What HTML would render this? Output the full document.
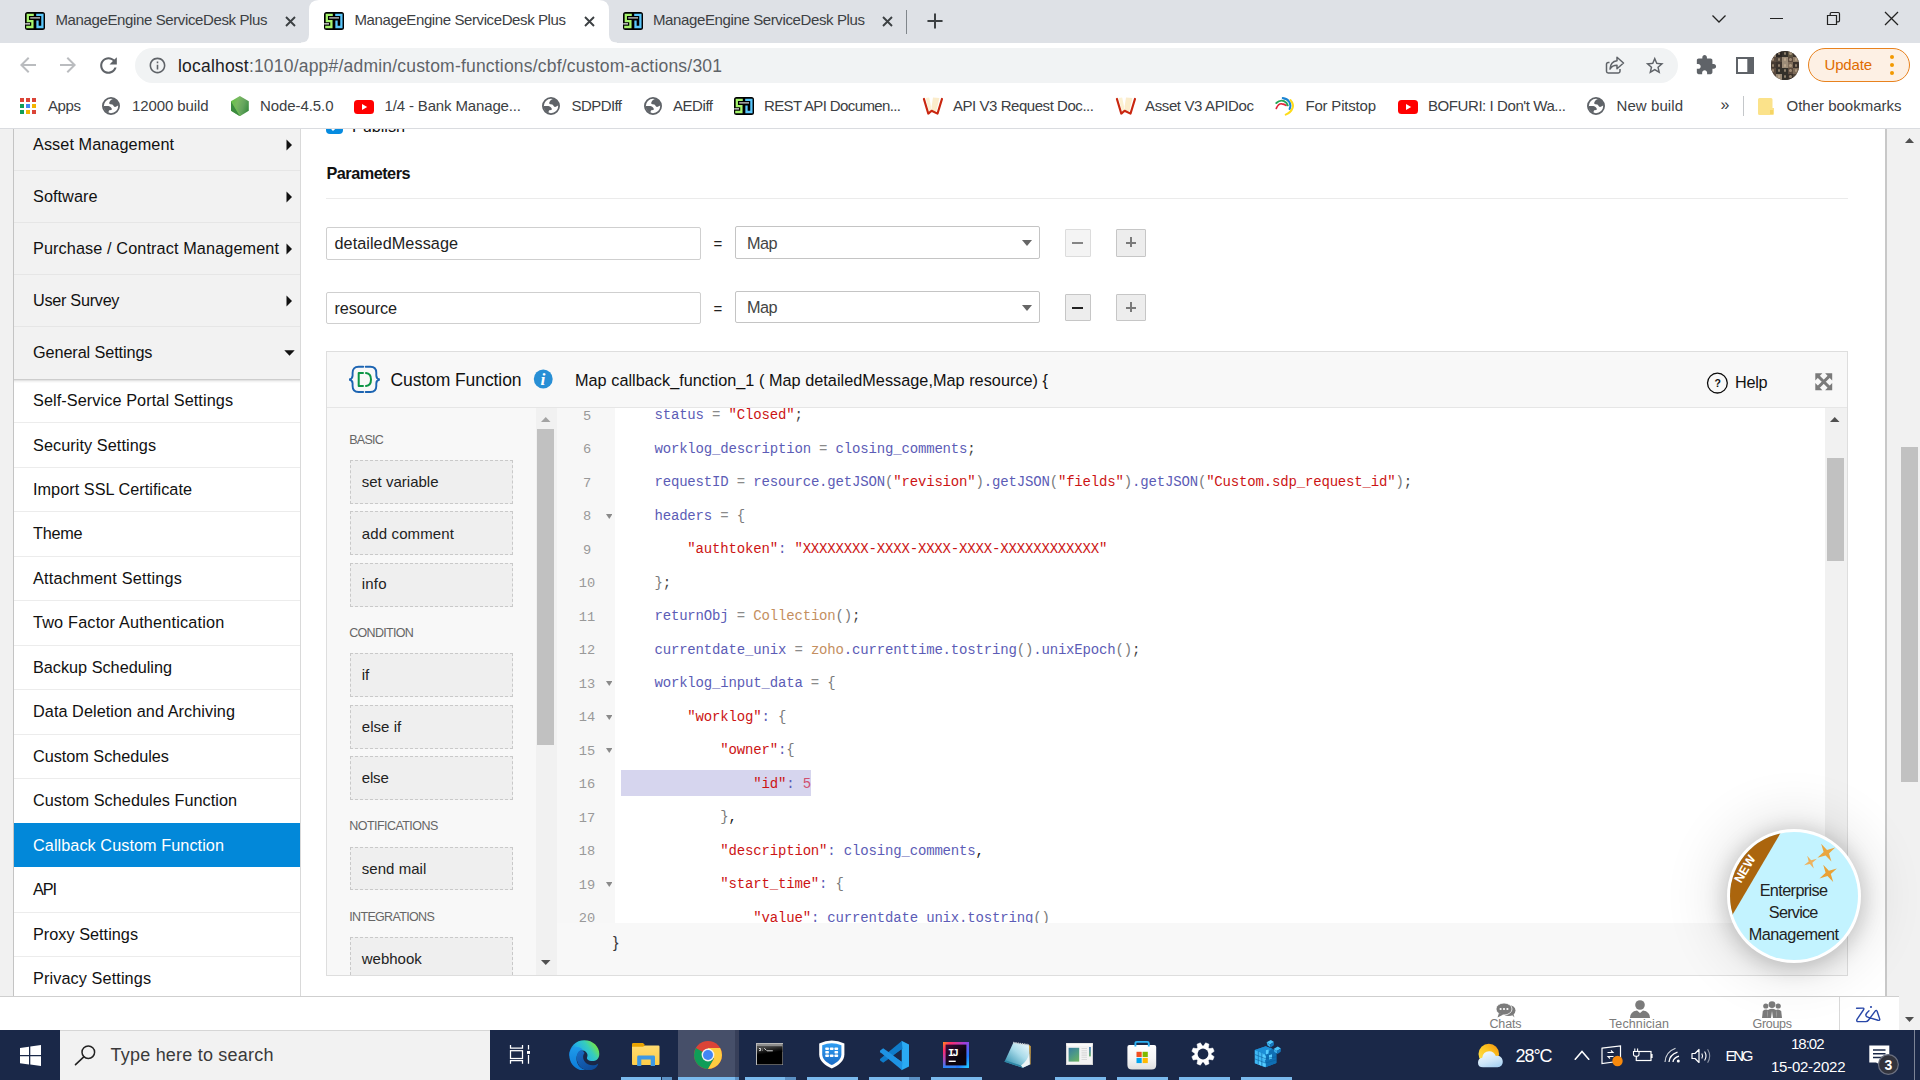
<!DOCTYPE html>
<html lang="en"><head><meta charset="utf-8"><title>ManageEngine ServiceDesk Plus</title>
<style>
html,body{margin:0;padding:0;}
body{width:1920px;height:1080px;overflow:hidden;position:relative;background:#fff;font-family:"Liberation Sans",sans-serif;}
.b{position:absolute;display:block;}
.t{position:absolute;white-space:pre;line-height:20px;font-family:"Liberation Sans",sans-serif;}
.m{position:absolute;white-space:pre;line-height:20px;font-family:"Liberation Mono",monospace;}
</style></head>
<body>
<!-- chrome -->
<div class="b" style="left:0px;top:0px;width:1920px;height:42.6px;background:#dee1e6;"></div>
<svg class="b" style="left:301px;top:0px;" width="316" height="43" viewBox="0 0 316 43"><path d="M0 42.6 Q8 42.6 8 34.6 V10 Q8 0 18 0 H298 Q308 0 308 10 V34.6 Q308 42.6 316 42.6 V43 H0 Z" fill="#fff"/></svg>
<svg class="b" style="left:25px;top:12px;" width="20" height="18" viewBox="0 0 20 18"><rect x="0" y="0" width="20" height="18" rx="2.5" fill="#000"/><path d="M8.8 2.8H2.8V9.2H7.4V15H1.2" fill="none" stroke="#a6f46c" stroke-width="2.3"/><path d="M11.2 2.9H17.4V15H12.5V8.4" fill="none" stroke="#5ac6fb" stroke-width="2.3"/><rect x="5.2" y="5.3" width="9.8" height="1.2" fill="#dcdcdc"/><rect x="0.2" y="11.2" width="4.8" height="1.3" fill="#e4e4e4"/></svg>
<div class="t" style="left:55.50px;top:9.80px;font-size:15px;color:#3c4043;letter-spacing:-0.380px;">ManageEngine ServiceDesk Plus</div>
<svg class="b" style="left:284.5px;top:15.5px;" width="11" height="11" viewBox="0 0 11 11"><path d="M1 1L10 10M10 1L1 10" stroke="#3c4043" stroke-width="1.9" fill="none"/></svg>
<svg class="b" style="left:324px;top:12px;" width="20" height="18" viewBox="0 0 20 18"><rect x="0" y="0" width="20" height="18" rx="2.5" fill="#000"/><path d="M8.8 2.8H2.8V9.2H7.4V15H1.2" fill="none" stroke="#a6f46c" stroke-width="2.3"/><path d="M11.2 2.9H17.4V15H12.5V8.4" fill="none" stroke="#5ac6fb" stroke-width="2.3"/><rect x="5.2" y="5.3" width="9.8" height="1.2" fill="#dcdcdc"/><rect x="0.2" y="11.2" width="4.8" height="1.3" fill="#e4e4e4"/></svg>
<div class="t" style="left:354.50px;top:9.80px;font-size:15px;color:#3c4043;letter-spacing:-0.397px;">ManageEngine ServiceDesk Plus</div>
<svg class="b" style="left:583.5px;top:15.5px;" width="11" height="11" viewBox="0 0 11 11"><path d="M1 1L10 10M10 1L1 10" stroke="#3c4043" stroke-width="1.9" fill="none"/></svg>
<svg class="b" style="left:623px;top:12px;" width="20" height="18" viewBox="0 0 20 18"><rect x="0" y="0" width="20" height="18" rx="2.5" fill="#000"/><path d="M8.8 2.8H2.8V9.2H7.4V15H1.2" fill="none" stroke="#a6f46c" stroke-width="2.3"/><path d="M11.2 2.9H17.4V15H12.5V8.4" fill="none" stroke="#5ac6fb" stroke-width="2.3"/><rect x="5.2" y="5.3" width="9.8" height="1.2" fill="#dcdcdc"/><rect x="0.2" y="11.2" width="4.8" height="1.3" fill="#e4e4e4"/></svg>
<div class="t" style="left:653.00px;top:9.80px;font-size:15px;color:#3c4043;letter-spacing:-0.380px;">ManageEngine ServiceDesk Plus</div>
<svg class="b" style="left:882px;top:15.5px;" width="11" height="11" viewBox="0 0 11 11"><path d="M1 1L10 10M10 1L1 10" stroke="#3c4043" stroke-width="1.9" fill="none"/></svg>
<div class="b" style="left:906px;top:10px;width:1.3px;height:23.5px;background:#80868b;"></div>
<svg class="b" style="left:927.2px;top:12.9px;" width="16" height="16" viewBox="0 0 16 16"><path d="M8 1.2V14.8M1.2 8H14.8" stroke="#3c4043" stroke-width="2" fill="none" stroke-linecap="round"/></svg>
<svg class="b" style="left:1711px;top:14px;" width="16" height="10" viewBox="0 0 16 10"><path d="M1.5 1.5L8 8L14.5 1.5" stroke="#222" stroke-width="1.3" fill="none"/></svg>
<div class="b" style="left:1770px;top:18px;width:13px;height:1.3px;background:#222;"></div>
<svg class="b" style="left:1826px;top:11px;" width="15" height="15" viewBox="0 0 15 15"><path d="M1.5 4.5H10.5V13.5H1.5Z" stroke="#222" stroke-width="1.2" fill="none"/><path d="M4.2 4.3V2.8Q4.2 1.5 5.5 1.5H12.2Q13.5 1.5 13.5 2.8V9.5Q13.5 10.8 12.2 10.8H10.8" stroke="#222" stroke-width="1.2" fill="none"/></svg>
<svg class="b" style="left:1884px;top:11px;" width="15" height="15" viewBox="0 0 15 15"><path d="M1 1L14 14M14 1L1 14" stroke="#222" stroke-width="1.3" fill="none"/></svg>
<div class="b" style="left:0px;top:43px;width:1920px;height:45px;background:#fff;"></div>
<svg class="b" style="left:15.5px;top:52.6px;" width="24" height="24" viewBox="0 0 24 24"><path fill="#babcbf" d="M20 11H7.83l5.59-5.59L12 4l-8 8 8 8 1.41-1.41L7.83 13H20v-2z"/></svg>
<svg class="b" style="left:55.5px;top:52.6px;" width="24" height="24" viewBox="0 0 24 24"><path fill="#babcbf" d="M12 4l-1.41 1.41L16.17 11H4v2h12.17l-5.58 5.59L12 20l8-8z"/></svg>
<svg class="b" style="left:95.5px;top:52.5px;" width="25" height="25" viewBox="0 0 24 24"><path fill="#5f6368" d="M17.65 6.35C16.2 4.9 14.21 4 12 4c-4.42 0-7.99 3.58-7.99 8s3.57 8 7.99 8c3.73 0 6.84-2.55 7.73-6h-2.08c-.82 2.33-3.04 4-5.65 4-3.31 0-6-2.69-6-6s2.69-6 6-6c1.66 0 3.14.69 4.22 1.78L13 11h7V4l-2.35 2.35z"/></svg>
<div class="b" style="left:135px;top:48px;width:1543px;height:34.5px;background:#f1f3f4;border-radius:17.5px;"></div>
<svg class="b" style="left:148px;top:56px;" width="19" height="19" viewBox="0 0 24 24"><path fill="#5f6368" d="M11 7h2v2h-2zm0 4h2v6h-2zm1-9C6.48 2 2 6.48 2 12s4.48 10 10 10 10-4.48 10-10S17.52 2 12 2zm0 18c-4.41 0-8-3.59-8-8s3.59-8 8-8 8 3.59 8 8-3.59 8-8 8z"/></svg>
<div class="t" style="left:178.00px;top:55.94px;font-size:17.5px;color:#202124;letter-spacing:0.201px;">localhost</div>
<div class="t" style="left:248.88px;top:55.94px;font-size:17.5px;color:#5f6368;letter-spacing:0.201px;">:1010/app#/admin/custom-functions/cbf/custom-actions/301</div>
<svg class="b" style="left:1605px;top:55px;" width="20" height="20" viewBox="0 0 20 20"><path d="M4.5 7.5H3.2Q1.5 7.5 1.5 9.2V16.3Q1.5 18 3.2 18H13.3Q15 18 15 16.3V14" stroke="#5f6368" stroke-width="1.5" fill="none"/><path d="M12 2.2L18.5 8L12 13.8V10.3C8.5 10.3 6.5 11.5 5 14C5.3 9.5 7.8 6.3 12 5.8Z" stroke="#5f6368" stroke-width="1.5" fill="none" stroke-linejoin="round"/></svg>
<svg class="b" style="left:1644px;top:54.5px;" width="21.5" height="21.5" viewBox="0 0 24 24"><path fill="#5f6368" d="M22 9.24l-7.19-.62L12 2 9.19 8.63 2 9.24l5.46 4.73L5.82 21 12 17.27 18.18 21l-1.63-7.03L22 9.24zM12 15.4l-3.76 2.27 1-4.28-3.32-2.88 4.38-.38L12 6.1l1.71 4.04 4.38.38-3.32 2.88 1 4.28L12 15.4z"/></svg>
<svg class="b" style="left:1695px;top:54px;" width="22" height="22" viewBox="0 0 24 24"><path fill="#5f6368" d="M20.5 11H19V7c0-1.1-.9-2-2-2h-4V3.5C13 2.12 11.88 1 10.5 1S8 2.12 8 3.5V5H4c-1.1 0-1.99.9-1.99 2v3.8H3.5c1.49 0 2.7 1.21 2.7 2.7s-1.21 2.7-2.7 2.7H2V20c0 1.1.9 2 2 2h3.8v-1.5c0-1.49 1.21-2.7 2.7-2.7 1.49 0 2.7 1.21 2.7 2.7V22H17c1.1 0 2-.9 2-2v-4h1.5c1.38 0 2.5-1.12 2.5-2.5S21.88 11 20.5 11z"/></svg>
<svg class="b" style="left:1736px;top:57px;" width="18" height="17" viewBox="0 0 18 17"><rect x="1" y="1" width="16" height="15" fill="none" stroke="#5f6368" stroke-width="2"/><rect x="11.3" y="1" width="5.7" height="15" fill="#5f6368"/></svg>
<div class="b" style="left:1770.5px;top:51px;width:28.5px;height:28.5px;border-radius:50%;overflow:hidden;background:#453b33;"><div class="b" style="left:0px;top:0px;width:5.8px;height:5.8px;background:#8f7d68;"></div><div class="b" style="left:1.6px;top:1.2px;width:2.4px;height:3px;background:rgba(214,190,160,0.55);border-radius:50%;"></div><div class="b" style="left:5.7px;top:0px;width:5.8px;height:5.8px;background:#2b2623;"></div><div class="b" style="left:7.3px;top:1.2px;width:2.4px;height:3px;background:rgba(214,190,160,0.55);border-radius:50%;"></div><div class="b" style="left:11.4px;top:0px;width:5.8px;height:5.8px;background:#33302a;"></div><div class="b" style="left:13px;top:1.2px;width:2.4px;height:3px;background:rgba(214,190,160,0.55);border-radius:50%;"></div><div class="b" style="left:17.1px;top:0px;width:5.8px;height:5.8px;background:#5d5340;"></div><div class="b" style="left:18.7px;top:1.2px;width:2.4px;height:3px;background:rgba(214,190,160,0.55);border-radius:50%;"></div><div class="b" style="left:22.8px;top:0px;width:5.8px;height:5.8px;background:#3b322c;"></div><div class="b" style="left:24.4px;top:1.2px;width:2.4px;height:3px;background:rgba(214,190,160,0.55);border-radius:50%;"></div><div class="b" style="left:0px;top:5.7px;width:5.8px;height:5.8px;background:#5a4a3e;"></div><div class="b" style="left:1.6px;top:6.9px;width:2.4px;height:3px;background:rgba(214,190,160,0.55);border-radius:50%;"></div><div class="b" style="left:5.7px;top:5.7px;width:5.8px;height:5.8px;background:#50453a;"></div><div class="b" style="left:7.3px;top:6.9px;width:2.4px;height:3px;background:rgba(214,190,160,0.55);border-radius:50%;"></div><div class="b" style="left:11.4px;top:5.7px;width:5.8px;height:5.8px;background:#9c8c78;"></div><div class="b" style="left:13px;top:6.9px;width:2.4px;height:3px;background:rgba(214,190,160,0.55);border-radius:50%;"></div><div class="b" style="left:17.1px;top:5.7px;width:5.8px;height:5.8px;background:#5a4a3e;"></div><div class="b" style="left:18.7px;top:6.9px;width:2.4px;height:3px;background:rgba(214,190,160,0.55);border-radius:50%;"></div><div class="b" style="left:22.8px;top:5.7px;width:5.8px;height:5.8px;background:#8f7d68;"></div><div class="b" style="left:24.4px;top:6.9px;width:2.4px;height:3px;background:rgba(214,190,160,0.55);border-radius:50%;"></div><div class="b" style="left:0px;top:11.4px;width:5.8px;height:5.8px;background:#453a31;"></div><div class="b" style="left:1.6px;top:12.6px;width:2.4px;height:3px;background:rgba(214,190,160,0.55);border-radius:50%;"></div><div class="b" style="left:5.7px;top:11.4px;width:5.8px;height:5.8px;background:#3b322c;"></div><div class="b" style="left:7.3px;top:12.6px;width:2.4px;height:3px;background:rgba(214,190,160,0.55);border-radius:50%;"></div><div class="b" style="left:11.4px;top:11.4px;width:5.8px;height:5.8px;background:#9c8c78;"></div><div class="b" style="left:13px;top:12.6px;width:2.4px;height:3px;background:rgba(214,190,160,0.55);border-radius:50%;"></div><div class="b" style="left:17.1px;top:11.4px;width:5.8px;height:5.8px;background:#7c6a58;"></div><div class="b" style="left:18.7px;top:12.6px;width:2.4px;height:3px;background:rgba(214,190,160,0.55);border-radius:50%;"></div><div class="b" style="left:22.8px;top:11.4px;width:5.8px;height:5.8px;background:#3b322c;"></div><div class="b" style="left:24.4px;top:12.6px;width:2.4px;height:3px;background:rgba(214,190,160,0.55);border-radius:50%;"></div><div class="b" style="left:0px;top:17.1px;width:5.8px;height:5.8px;background:#5a4a3e;"></div><div class="b" style="left:1.6px;top:18.3px;width:2.4px;height:3px;background:rgba(214,190,160,0.55);border-radius:50%;"></div><div class="b" style="left:5.7px;top:17.1px;width:5.8px;height:5.8px;background:#33302a;"></div><div class="b" style="left:7.3px;top:18.3px;width:2.4px;height:3px;background:rgba(214,190,160,0.55);border-radius:50%;"></div><div class="b" style="left:11.4px;top:17.1px;width:5.8px;height:5.8px;background:#33302a;"></div><div class="b" style="left:13px;top:18.3px;width:2.4px;height:3px;background:rgba(214,190,160,0.55);border-radius:50%;"></div><div class="b" style="left:17.1px;top:17.1px;width:5.8px;height:5.8px;background:#5a4a3e;"></div><div class="b" style="left:18.7px;top:18.3px;width:2.4px;height:3px;background:rgba(214,190,160,0.55);border-radius:50%;"></div><div class="b" style="left:22.8px;top:17.1px;width:5.8px;height:5.8px;background:#7c6a58;"></div><div class="b" style="left:24.4px;top:18.3px;width:2.4px;height:3px;background:rgba(214,190,160,0.55);border-radius:50%;"></div><div class="b" style="left:0px;top:22.8px;width:5.8px;height:5.8px;background:#5a4a3e;"></div><div class="b" style="left:1.6px;top:24px;width:2.4px;height:3px;background:rgba(214,190,160,0.55);border-radius:50%;"></div><div class="b" style="left:5.7px;top:22.8px;width:5.8px;height:5.8px;background:#9c8c78;"></div><div class="b" style="left:7.3px;top:24px;width:2.4px;height:3px;background:rgba(214,190,160,0.55);border-radius:50%;"></div><div class="b" style="left:11.4px;top:22.8px;width:5.8px;height:5.8px;background:#33302a;"></div><div class="b" style="left:13px;top:24px;width:2.4px;height:3px;background:rgba(214,190,160,0.55);border-radius:50%;"></div><div class="b" style="left:17.1px;top:22.8px;width:5.8px;height:5.8px;background:#3b322c;"></div><div class="b" style="left:18.7px;top:24px;width:2.4px;height:3px;background:rgba(214,190,160,0.55);border-radius:50%;"></div><div class="b" style="left:22.8px;top:22.8px;width:5.8px;height:5.8px;background:#50453a;"></div><div class="b" style="left:24.4px;top:24px;width:2.4px;height:3px;background:rgba(214,190,160,0.55);border-radius:50%;"></div></div>
<div class="b" style="left:1808px;top:48px;width:102px;height:34px;background:#fdf0e4;border:1.5px solid #e8821e;border-radius:17px;box-sizing:border-box;"></div>
<div class="t" style="left:1824.50px;top:54.80px;font-size:15px;color:#e06c00;letter-spacing:-0.174px;">Update</div>
<div class="b" style="left:1890px;top:55px;width:4px;height:4px;background:#f29900;border-radius:50%;"></div>
<div class="b" style="left:1890px;top:63px;width:4px;height:4px;background:#f29900;border-radius:50%;"></div>
<div class="b" style="left:1890px;top:71px;width:4px;height:4px;background:#f29900;border-radius:50%;"></div>
<div class="b" style="left:0px;top:88px;width:1920px;height:40px;background:#fff;"></div>
<div class="b" style="left:0px;top:128px;width:1920px;height:1px;background:#dadce0;"></div>
<div class="b" style="left:20px;top:97.5px;width:4.2px;height:4.2px;background:#db4437;"></div>
<div class="b" style="left:26px;top:97.5px;width:4.2px;height:4.2px;background:#db4437;"></div>
<div class="b" style="left:32px;top:97.5px;width:4.2px;height:4.2px;background:#db4437;"></div>
<div class="b" style="left:20px;top:103.5px;width:4.2px;height:4.2px;background:#0f9d58;"></div>
<div class="b" style="left:26px;top:103.5px;width:4.2px;height:4.2px;background:#4285f4;"></div>
<div class="b" style="left:32px;top:103.5px;width:4.2px;height:4.2px;background:#f4b400;"></div>
<div class="b" style="left:20px;top:109.5px;width:4.2px;height:4.2px;background:#0f9d58;"></div>
<div class="b" style="left:26px;top:109.5px;width:4.2px;height:4.2px;background:#f4b400;"></div>
<div class="b" style="left:32px;top:109.5px;width:4.2px;height:4.2px;background:#db4437;"></div>
<div class="t" style="left:48.00px;top:95.80px;font-size:15px;color:#3c4043;letter-spacing:-0.397px;">Apps</div>
<svg class="b" style="left:102px;top:97px;" width="18" height="18" viewBox="0 0 18 18"><circle cx="9" cy="9" r="8.1" fill="#fff" stroke="#5f6368" stroke-width="1.8"/><path d="M10.1 2.2Q8.3 3.3 7.9 4.2Q7 5.5 7.2 6.4Q7.6 7.2 8.5 7.2L10.4 7.4Q11.2 7.8 11.8 9.3Q12.6 10.2 13.7 9.8L15.9 8.7Q16.6 5.5 14.4 3Q12.5 1.3 10.1 2.2Z" fill="#5f6368"/><path d="M1.7 9H6.4Q8 9.3 8.8 10.3Q9.9 11.5 9.8 12.2Q9.7 12.9 9.2 13L7.3 13.2Q6.5 13.8 6.6 14.7Q6.8 15.4 7.5 15.8Q4.5 15.8 2.8 13.3Q1.6 11.4 1.7 9Z" fill="#5f6368"/></svg>
<div class="t" style="left:132.00px;top:95.80px;font-size:15px;color:#3c4043;letter-spacing:-0.107px;">12000 build</div>
<svg class="b" style="left:231px;top:95.9px;" width="17.8" height="20.2" viewBox="0 0 17.8 20.2"><defs><linearGradient id="nd" x1="0" y1="0.2" x2="1" y2="0.6"><stop offset="0" stop-color="#62c341"/><stop offset="0.35" stop-color="#79b862"/><stop offset="0.7" stop-color="#63a35d"/><stop offset="1" stop-color="#3b8d40"/></linearGradient></defs><path d="M8.9 0L17.8 5.2V14.8L8.9 20.2L0 14.8V5.2Z" fill="url(#nd)"/><path d="M0 5.2L8.9 20.2L0 14.8Z" fill="#3c8b3f"/><path d="M0 5.2L1.2 4.5L10.2 19.4L8.9 20.2Z" fill="#6fc24f" opacity="0.55"/></svg>
<div class="t" style="left:260.00px;top:95.80px;font-size:15px;color:#3c4043;letter-spacing:-0.080px;">Node-4.5.0</div>
<svg class="b" style="left:354px;top:99.5px;" width="20" height="14" viewBox="0 0 20 14"><rect width="20" height="14" rx="3.5" fill="#f00"/><path d="M8 4l5.2 3L8 10z" fill="#fff"/></svg>
<div class="t" style="left:384.50px;top:95.80px;font-size:15px;color:#3c4043;letter-spacing:-0.145px;">1/4 - Bank Manage...</div>
<svg class="b" style="left:542px;top:97px;" width="18" height="18" viewBox="0 0 18 18"><circle cx="9" cy="9" r="8.1" fill="#fff" stroke="#5f6368" stroke-width="1.8"/><path d="M10.1 2.2Q8.3 3.3 7.9 4.2Q7 5.5 7.2 6.4Q7.6 7.2 8.5 7.2L10.4 7.4Q11.2 7.8 11.8 9.3Q12.6 10.2 13.7 9.8L15.9 8.7Q16.6 5.5 14.4 3Q12.5 1.3 10.1 2.2Z" fill="#5f6368"/><path d="M1.7 9H6.4Q8 9.3 8.8 10.3Q9.9 11.5 9.8 12.2Q9.7 12.9 9.2 13L7.3 13.2Q6.5 13.8 6.6 14.7Q6.8 15.4 7.5 15.8Q4.5 15.8 2.8 13.3Q1.6 11.4 1.7 9Z" fill="#5f6368"/></svg>
<div class="t" style="left:571.50px;top:95.80px;font-size:15px;color:#3c4043;letter-spacing:-0.568px;">SDPDIff</div>
<svg class="b" style="left:644px;top:97px;" width="18" height="18" viewBox="0 0 18 18"><circle cx="9" cy="9" r="8.1" fill="#fff" stroke="#5f6368" stroke-width="1.8"/><path d="M10.1 2.2Q8.3 3.3 7.9 4.2Q7 5.5 7.2 6.4Q7.6 7.2 8.5 7.2L10.4 7.4Q11.2 7.8 11.8 9.3Q12.6 10.2 13.7 9.8L15.9 8.7Q16.6 5.5 14.4 3Q12.5 1.3 10.1 2.2Z" fill="#5f6368"/><path d="M1.7 9H6.4Q8 9.3 8.8 10.3Q9.9 11.5 9.8 12.2Q9.7 12.9 9.2 13L7.3 13.2Q6.5 13.8 6.6 14.7Q6.8 15.4 7.5 15.8Q4.5 15.8 2.8 13.3Q1.6 11.4 1.7 9Z" fill="#5f6368"/></svg>
<div class="t" style="left:673.00px;top:95.80px;font-size:15px;color:#3c4043;letter-spacing:-0.448px;">AEDiff</div>
<svg class="b" style="left:734px;top:97px;" width="20" height="18" viewBox="0 0 20 18"><rect x="0" y="0" width="20" height="18" rx="2.5" fill="#000"/><path d="M8.8 2.8H2.8V9.2H7.4V15H1.2" fill="none" stroke="#a6f46c" stroke-width="2.3"/><path d="M11.2 2.9H17.4V15H12.5V8.4" fill="none" stroke="#5ac6fb" stroke-width="2.3"/><rect x="5.2" y="5.3" width="9.8" height="1.2" fill="#dcdcdc"/><rect x="0.2" y="11.2" width="4.8" height="1.3" fill="#e4e4e4"/></svg>
<div class="t" style="left:764.00px;top:95.80px;font-size:15px;color:#3c4043;letter-spacing:-0.618px;">REST API Documen...</div>
<svg class="b" style="left:922px;top:97px;" width="22" height="19" viewBox="0 0 22 19"><path d="M3.7 0.9L7.2 0.5L9 9.6L9.6 13.1L6.9 14.5Z" fill="#fcf1d2"/><path d="M11 0.5L17.4 1L14.3 14.8L9.9 13.1L9.6 9.6Z" fill="#fbeccb"/><path d="M1.9 1.9L6.3 16.6L9.6 13.7L15.5 16.6L20 1.9" fill="none" stroke="#c9260f" stroke-width="2.1" stroke-linejoin="round" stroke-linecap="round"/></svg>
<div class="t" style="left:953.00px;top:95.80px;font-size:15px;color:#3c4043;letter-spacing:-0.454px;">API V3 Request Doc...</div>
<svg class="b" style="left:1114.5px;top:97px;" width="22" height="19" viewBox="0 0 22 19"><path d="M3.7 0.9L7.2 0.5L9 9.6L9.6 13.1L6.9 14.5Z" fill="#fcf1d2"/><path d="M11 0.5L17.4 1L14.3 14.8L9.9 13.1L9.6 9.6Z" fill="#fbeccb"/><path d="M1.9 1.9L6.3 16.6L9.6 13.7L15.5 16.6L20 1.9" fill="none" stroke="#c9260f" stroke-width="2.1" stroke-linejoin="round" stroke-linecap="round"/></svg>
<div class="t" style="left:1145.00px;top:95.80px;font-size:15px;color:#3c4043;letter-spacing:-0.373px;">Asset V3 APIDoc</div>
<svg class="b" style="left:1274px;top:96px;" width="21" height="20" viewBox="0 0 21 20"><path d="M2.3 12.4Q4.5 7.3 7.8 7.8Q10.2 8 12 9.4" stroke="#e0243a" stroke-width="1.7" fill="none" stroke-linecap="round"/><path d="M2.3 7Q6 3.6 10 5.1Q13 6.4 13.8 9.4" stroke="#23a455" stroke-width="1.9" fill="none" stroke-linecap="round"/><path d="M8.8 2.1Q13 2.4 15.4 6Q17.3 9.5 15.6 13" stroke="#1b84d2" stroke-width="2.1" fill="none" stroke-linecap="round"/><path d="M16.5 4.1Q19.8 8 18.7 11.6Q17 16.6 11.7 18.6" stroke="#fddc1a" stroke-width="2" fill="none" stroke-linecap="round"/></svg>
<div class="t" style="left:1305.50px;top:95.80px;font-size:15px;color:#3c4043;letter-spacing:-0.203px;">For Pitstop</div>
<svg class="b" style="left:1398px;top:99.5px;" width="20" height="14" viewBox="0 0 20 14"><rect width="20" height="14" rx="3.5" fill="#f00"/><path d="M8 4l5.2 3L8 10z" fill="#fff"/></svg>
<div class="t" style="left:1428.00px;top:95.80px;font-size:15px;color:#3c4043;letter-spacing:-0.425px;">BOFURI: I Don't Wa...</div>
<svg class="b" style="left:1587px;top:97px;" width="18" height="18" viewBox="0 0 18 18"><circle cx="9" cy="9" r="8.1" fill="#fff" stroke="#5f6368" stroke-width="1.8"/><path d="M10.1 2.2Q8.3 3.3 7.9 4.2Q7 5.5 7.2 6.4Q7.6 7.2 8.5 7.2L10.4 7.4Q11.2 7.8 11.8 9.3Q12.6 10.2 13.7 9.8L15.9 8.7Q16.6 5.5 14.4 3Q12.5 1.3 10.1 2.2Z" fill="#5f6368"/><path d="M1.7 9H6.4Q8 9.3 8.8 10.3Q9.9 11.5 9.8 12.2Q9.7 12.9 9.2 13L7.3 13.2Q6.5 13.8 6.6 14.7Q6.8 15.4 7.5 15.8Q4.5 15.8 2.8 13.3Q1.6 11.4 1.7 9Z" fill="#5f6368"/></svg>
<div class="t" style="left:1616.50px;top:95.80px;font-size:15px;color:#3c4043;letter-spacing:0.079px;">New build</div>
<div class="t" style="left:1720.50px;top:94.96px;font-size:16px;color:#3c4043;">»</div>
<div class="b" style="left:1743px;top:96px;width:1px;height:19.5px;background:#c4c7ca;"></div>
<svg class="b" style="left:1758px;top:97px;" width="17" height="18" viewBox="0 0 17 18"><path d="M0 2.5Q0 1 1.5 1H13Q14.5 1 14.5 2.5V11H16V16.5Q16 18 14.5 18H1.5Q0 18 0 16.5Z" fill="#fbe28a"/><rect x="12" y="13" width="3" height="4" fill="#f5d565"/></svg>
<div class="t" style="left:1786.50px;top:95.80px;font-size:15px;color:#3c4043;letter-spacing:-0.003px;">Other bookmarks</div>
<!-- sidebar -->
<div class="b" style="left:0px;top:129px;width:1920px;height:901px;background:#fff;"></div>
<div class="b" style="left:0px;top:129px;width:13px;height:868px;background:#f1f1f1;"></div>
<div class="b" style="left:13px;top:129px;width:1px;height:868px;background:#c4c4c4;"></div>
<div class="b" style="left:14px;top:129px;width:286px;height:250px;background:#f2f2f2;"></div>
<div class="b" style="left:14px;top:170px;width:286px;height:1px;background:#e6e6e6;"></div>
<div class="b" style="left:14px;top:222px;width:286px;height:1px;background:#e6e6e6;"></div>
<div class="b" style="left:14px;top:274px;width:286px;height:1px;background:#e6e6e6;"></div>
<div class="b" style="left:14px;top:326px;width:286px;height:1px;background:#e6e6e6;"></div>
<div class="b" style="left:14px;top:379px;width:286px;height:1px;background:#cdcdcd;"></div>
<div class="b" style="left:14px;top:380px;width:286px;height:1px;background:#e4e4e4;"></div>
<div class="b" style="left:14px;top:381px;width:286px;height:1px;background:#f3f3f3;"></div>
<div class="b" style="left:14px;top:382px;width:286px;height:1px;background:#fafafa;"></div>
<div class="b" style="left:300px;top:129px;width:1px;height:868px;background:#d9d9d9;"></div>
<div class="t" style="left:33.00px;top:134.37px;font-size:16.25px;color:#111;letter-spacing:0.066px;">Asset Management</div>
<div class="t" style="left:33.00px;top:186.37px;font-size:16.25px;color:#111;letter-spacing:0.053px;">Software</div>
<div class="t" style="left:33.00px;top:238.37px;font-size:16.25px;color:#111;letter-spacing:0.104px;">Purchase / Contract Management</div>
<div class="t" style="left:33.00px;top:290.37px;font-size:16.25px;color:#111;letter-spacing:-0.290px;">User Survey</div>
<div class="t" style="left:33.00px;top:342.37px;font-size:16.25px;color:#111;letter-spacing:-0.103px;">General Settings</div>
<svg class="b" style="left:286px;top:138.5px;" width="7" height="12" viewBox="0 0 7 12"><path d="M0.5 0.5L6 6L0.5 11.5Z" fill="#111"/></svg>
<svg class="b" style="left:286px;top:190.5px;" width="7" height="12" viewBox="0 0 7 12"><path d="M0.5 0.5L6 6L0.5 11.5Z" fill="#111"/></svg>
<svg class="b" style="left:286px;top:242.5px;" width="7" height="12" viewBox="0 0 7 12"><path d="M0.5 0.5L6 6L0.5 11.5Z" fill="#111"/></svg>
<svg class="b" style="left:286px;top:294.5px;" width="7" height="12" viewBox="0 0 7 12"><path d="M0.5 0.5L6 6L0.5 11.5Z" fill="#111"/></svg>
<svg class="b" style="left:283.5px;top:349.5px;" width="11" height="6" viewBox="0 0 11 6"><path d="M0.3 0.3H10.7L5.5 5.7Z" fill="#111"/></svg>
<div class="t" style="left:33.00px;top:390.12px;font-size:16.25px;color:#111;letter-spacing:0.082px;">Self-Service Portal Settings</div>
<div class="b" style="left:14px;top:422px;width:286px;height:1px;background:#ececec;"></div>
<div class="t" style="left:33.00px;top:434.57px;font-size:16.25px;color:#111;letter-spacing:0.067px;">Security Settings</div>
<div class="b" style="left:14px;top:467px;width:286px;height:1px;background:#ececec;"></div>
<div class="t" style="left:33.00px;top:479.02px;font-size:16.25px;color:#111;letter-spacing:0.031px;">Import SSL Certificate</div>
<div class="b" style="left:14px;top:511px;width:286px;height:1px;background:#ececec;"></div>
<div class="t" style="left:33.00px;top:523.47px;font-size:16.25px;color:#111;letter-spacing:-0.269px;">Theme</div>
<div class="b" style="left:14px;top:556px;width:286px;height:1px;background:#ececec;"></div>
<div class="t" style="left:33.00px;top:567.92px;font-size:16.25px;color:#111;letter-spacing:0.185px;">Attachment Settings</div>
<div class="b" style="left:14px;top:600px;width:286px;height:1px;background:#ececec;"></div>
<div class="t" style="left:33.00px;top:612.37px;font-size:16.25px;color:#111;letter-spacing:0.178px;">Two Factor Authentication</div>
<div class="b" style="left:14px;top:645px;width:286px;height:1px;background:#ececec;"></div>
<div class="t" style="left:33.00px;top:656.82px;font-size:16.25px;color:#111;letter-spacing:-0.008px;">Backup Scheduling</div>
<div class="b" style="left:14px;top:689px;width:286px;height:1px;background:#ececec;"></div>
<div class="t" style="left:33.00px;top:701.27px;font-size:16.25px;color:#111;letter-spacing:0.056px;">Data Deletion and Archiving</div>
<div class="b" style="left:14px;top:734px;width:286px;height:1px;background:#ececec;"></div>
<div class="t" style="left:33.00px;top:745.72px;font-size:16.25px;color:#111;letter-spacing:-0.026px;">Custom Schedules</div>
<div class="b" style="left:14px;top:778px;width:286px;height:1px;background:#ececec;"></div>
<div class="t" style="left:33.00px;top:790.17px;font-size:16.25px;color:#111;letter-spacing:0.032px;">Custom Schedules Function</div>
<div class="b" style="left:14px;top:823px;width:286px;height:44px;background:#0288d9;"></div>
<div class="t" style="left:33.00px;top:834.62px;font-size:16.25px;color:#fff;letter-spacing:0.058px;">Callback Custom Function</div>
<div class="t" style="left:33.00px;top:879.07px;font-size:16.25px;color:#111;letter-spacing:-1.096px;">API</div>
<div class="b" style="left:14px;top:912px;width:286px;height:1px;background:#ececec;"></div>
<div class="t" style="left:33.00px;top:923.52px;font-size:16.25px;color:#111;letter-spacing:0.018px;">Proxy Settings</div>
<div class="b" style="left:14px;top:956px;width:286px;height:1px;background:#ececec;"></div>
<div class="t" style="left:33.00px;top:967.97px;font-size:16.25px;color:#111;letter-spacing:0.100px;">Privacy Settings</div>
<div class="b" style="left:0px;top:996px;width:1900px;height:1px;background:#cfcfcf;"></div>
<!-- mainc -->
<div class="b" style="left:326px;top:129px;width:17px;height:5px;background:#068be0;border-radius:0 0 4px 4px;"></div>
<svg class="b" style="left:328px;top:129px;" width="13" height="4" viewBox="0 0 13 4"><path d="M3.6 -0.6L5 1L7 -0.8" fill="none" stroke="#fff" stroke-width="1.5"/></svg>
<div class="b" style="left:352px;top:129px;width:60px;height:4.5px;overflow:hidden;"><div class="t" style="left:0.00px;top:-13.13px;font-size:16.25px;color:#111;letter-spacing:-0.050px;">Publish</div></div>
<div class="t" style="left:326.50px;top:163.12px;font-size:16.25px;color:#111;letter-spacing:-0.504px;font-weight:700;">Parameters</div>
<div class="b" style="left:326px;top:198px;width:1522px;height:1px;background:#ebebeb;"></div>
<div class="b" style="left:326px;top:227px;width:375px;height:33px;background:#fff;border:1px solid #cfcfcf;box-sizing:border-box;border-radius:2px;"></div>
<div class="t" style="left:334.50px;top:233.37px;font-size:16.25px;color:#222;letter-spacing:0.046px;">detailedMessage</div>
<div class="t" style="left:713.50px;top:233.80px;font-size:15px;color:#222;">=</div>
<div class="b" style="left:735px;top:226px;width:305px;height:33px;background:#fff;border:1px solid #c4c4c4;box-sizing:border-box;border-radius:2px;"></div>
<div class="t" style="left:747.00px;top:233.47px;font-size:16.25px;color:#444;letter-spacing:-0.556px;">Map</div>
<svg class="b" style="left:1021.5px;top:239.5px;" width="10" height="6" viewBox="0 0 10 6"><path d="M0 0H10L5 6Z" fill="#666"/></svg>
<div class="b" style="left:1065px;top:229px;width:26px;height:28px;background:#f4f4f4;border:1px solid #dcdcdc;box-sizing:border-box;border-radius:1px;"></div>
<div class="b" style="left:1072.3px;top:242.2px;width:11px;height:1.6px;background:#858585;"></div>
<div class="b" style="left:1116px;top:229px;width:30px;height:28px;background:#ededed;border:1px solid #c6c6c6;box-sizing:border-box;border-radius:1px;"></div>
<div class="b" style="left:1125.5px;top:241.6px;width:10px;height:2px;background:#7a7a7a;"></div>
<div class="b" style="left:1129.5px;top:237.4px;width:2px;height:10px;background:#7a7a7a;"></div>
<div class="b" style="left:326px;top:292px;width:375px;height:32px;background:#fff;border:1px solid #cfcfcf;box-sizing:border-box;border-radius:2px;"></div>
<div class="t" style="left:334.50px;top:298.12px;font-size:16.25px;color:#222;letter-spacing:-0.104px;">resource</div>
<div class="t" style="left:713.50px;top:298.55px;font-size:15px;color:#222;">=</div>
<div class="b" style="left:735px;top:291px;width:305px;height:32px;background:#fff;border:1px solid #c4c4c4;box-sizing:border-box;border-radius:2px;"></div>
<div class="t" style="left:747.00px;top:297.22px;font-size:16.25px;color:#444;letter-spacing:-0.556px;">Map</div>
<svg class="b" style="left:1021.5px;top:304.5px;" width="10" height="6" viewBox="0 0 10 6"><path d="M0 0H10L5 6Z" fill="#666"/></svg>
<div class="b" style="left:1065px;top:294px;width:26px;height:27px;background:#ededed;border:1px solid #c6c6c6;box-sizing:border-box;border-radius:1px;"></div>
<div class="b" style="left:1072.3px;top:307.2px;width:11px;height:1.6px;background:#222;"></div>
<div class="b" style="left:1116px;top:294px;width:30px;height:27px;background:#ededed;border:1px solid #c6c6c6;box-sizing:border-box;border-radius:1px;"></div>
<div class="b" style="left:1125.5px;top:306.6px;width:10px;height:2px;background:#7a7a7a;"></div>
<div class="b" style="left:1129.5px;top:302.4px;width:2px;height:10px;background:#7a7a7a;"></div>
<!-- editor -->
<div class="b" style="left:326px;top:351px;width:1522px;height:625px;background:#fff;border:1px solid #dedede;box-sizing:border-box;"></div>
<div class="b" style="left:327px;top:352px;width:1520px;height:55px;background:#f8f8f8;"></div>
<div class="b" style="left:327px;top:407px;width:1520px;height:1px;background:#e6e6e6;"></div>
<svg class="b" style="left:348px;top:364px;" width="33" height="31" viewBox="0 0 33 31"><path d="M15.2 2.8H10.5Q4.6 2.8 4.6 8.8V11.5Q4.6 14.8 1.2 15.5Q4.6 16.2 4.6 19.5V22Q4.6 28 10.5 28H15.2" fill="none" stroke="#1c64b2" stroke-width="1.9" stroke-linecap="round"/><path d="M17.7 2.8H22.4Q28.3 2.8 28.3 8.8V11.5Q28.3 14.8 31.7 15.5Q28.3 16.2 28.3 19.5V22Q28.3 28 22.4 28H17.7" fill="none" stroke="#1c64b2" stroke-width="1.9" stroke-linecap="round"/><path d="M15 9H10.7V22H15" fill="none" stroke="#0c9545" stroke-width="2" stroke-linecap="round" stroke-linejoin="round"/><path d="M18 9Q23 9.5 23 15.5Q23 21.5 18 22" fill="none" stroke="#0c9545" stroke-width="2" stroke-linecap="round"/></svg>
<div class="t" style="left:390.50px;top:370.34px;font-size:17.5px;color:#111;letter-spacing:-0.091px;">Custom Function</div>
<svg class="b" style="left:533px;top:369px;" width="20" height="20" viewBox="0 0 20 20"><circle cx="10.25" cy="9.95" r="9.45" fill="#288fd5"/></svg>
<div class="t" style="left:540.60px;top:369.14px;font-size:17.5px;color:#fff;font-weight:700;font-style:italic;font-family:'Liberation Serif',serif;">i</div>
<div class="t" style="left:575.00px;top:369.97px;font-size:16.25px;color:#111;letter-spacing:0.025px;">Map callback_function_1 ( Map detailedMessage,Map resource) {</div>
<svg class="b" style="left:1705px;top:370.5px;" width="24" height="24" viewBox="0 0 24 24"><circle cx="12.4" cy="12.1" r="9.9" fill="none" stroke="#0a0a0a" stroke-width="1.3"/></svg>
<div class="t" style="left:1714.40px;top:372.66px;font-size:10.5px;color:#111;font-weight:700;">?</div>
<div class="t" style="left:1735.00px;top:372.37px;font-size:16.25px;color:#111;letter-spacing:-0.307px;">Help</div>
<svg class="b" style="left:1815px;top:373px;" width="17.5" height="17.5" viewBox="0 0 17.5 17.5"><path d="M3.5 3.5L14 14M14 3.5L3.5 14" stroke="#7a7a7a" stroke-width="3.1" fill="none"/><path d="M0.3 0.3H7.4L0.3 7.4Z M17.2 0.3H10.1L17.2 7.4Z M0.3 17.2H7.4L0.3 10.1Z M17.2 17.2H10.1L17.2 10.1Z" fill="#7a7a7a"/></svg>
<div class="b" style="left:327px;top:408px;width:209px;height:567px;background:#f8f8f8;"></div>
<div class="b" style="left:536px;top:408px;width:21px;height:567px;background:#f1f1f1;"></div>
<svg class="b" style="left:541px;top:417px;" width="9.5" height="5" viewBox="0 0 9.5 5"><path d="M0 5L4.75 0L9.5 5Z" fill="#a3a3a3"/></svg>
<svg class="b" style="left:541px;top:959.5px;" width="9.5" height="5" viewBox="0 0 9.5 5"><path d="M0 0L4.75 5L9.5 0Z" fill="#505050"/></svg>
<div class="b" style="left:537px;top:429px;width:17px;height:316px;background:#c1c1c1;"></div>
<div class="t" style="left:349.25px;top:430.17px;font-size:12.5px;color:#666;letter-spacing:-0.753px;">BASIC</div>
<div class="b" style="left:350px;top:460px;width:163px;height:44px;background:#efefef;border:1px dashed #c9c9c9;box-sizing:border-box;"></div><div class="t" style="left:361.75px;top:471.80px;font-size:15px;color:#222;letter-spacing:0.004px;">set variable</div>
<div class="b" style="left:350px;top:511px;width:163px;height:44px;background:#efefef;border:1px dashed #c9c9c9;box-sizing:border-box;"></div><div class="t" style="left:361.75px;top:523.55px;font-size:15px;color:#222;letter-spacing:0.137px;">add comment</div>
<div class="b" style="left:350px;top:563px;width:163px;height:44px;background:#efefef;border:1px dashed #c9c9c9;box-sizing:border-box;"></div><div class="t" style="left:361.75px;top:574.40px;font-size:15px;color:#222;letter-spacing:0.188px;">info</div>
<div class="t" style="left:349.25px;top:623.17px;font-size:12.5px;color:#666;letter-spacing:-0.704px;">CONDITION</div>
<div class="b" style="left:350px;top:653px;width:163px;height:44px;background:#efefef;border:1px dashed #c9c9c9;box-sizing:border-box;"></div><div class="t" style="left:361.75px;top:664.80px;font-size:15px;color:#222;letter-spacing:0.000px;">if</div>
<div class="b" style="left:350px;top:705px;width:163px;height:44px;background:#efefef;border:1px dashed #c9c9c9;box-sizing:border-box;"></div><div class="t" style="left:361.75px;top:716.80px;font-size:15px;color:#222;letter-spacing:0.052px;">else if</div>
<div class="b" style="left:350px;top:756px;width:163px;height:44px;background:#efefef;border:1px dashed #c9c9c9;box-sizing:border-box;"></div><div class="t" style="left:361.75px;top:767.80px;font-size:15px;color:#222;letter-spacing:-0.173px;">else</div>
<div class="t" style="left:349.25px;top:815.67px;font-size:12.5px;color:#666;letter-spacing:-0.550px;">NOTIFICATIONS</div>
<div class="b" style="left:350px;top:847px;width:163px;height:43px;background:#efefef;border:1px dashed #c9c9c9;box-sizing:border-box;"></div><div class="t" style="left:361.75px;top:859.10px;font-size:15px;color:#222;letter-spacing:0.038px;">send mail</div>
<div class="t" style="left:349.25px;top:906.67px;font-size:12.5px;color:#666;letter-spacing:-0.666px;">INTEGRATIONS</div>
<div class="b" style="left:350px;top:937px;width:163px;height:38px;background:#efefef;border:1px dashed #c9c9c9;border-bottom:none;box-sizing:border-box;"></div>
<div class="t" style="left:361.75px;top:948.80px;font-size:15px;color:#222;letter-spacing:-0.008px;">webhook</div>
<div class="b" style="left:557px;top:408px;width:58px;height:515px;background:#f7f7f7;"></div>
<div class="b" style="left:615px;top:408px;width:1210px;height:515px;background:#fff;"></div>
<div class="b" style="left:621px;top:770px;width:190px;height:26px;background:#d6d5ee;"></div>
<div class="b" style="left:557px;top:408px;width:1269px;height:514.5px;overflow:hidden;"><div class="m" style="left:64.50px;top:-2.73px;font-size:14px;letter-spacing:-0.168px;"><span style="color:#5c5cb6">    status</span><span style="color:#8a8a8a"> = </span><span style="color:#cc1414">"Closed"</span><span style="color:#444">;</span></div><div class="m" style="left:25.88px;top:-0.53px;font-size:13.7px;letter-spacing:0.012px;color:#999;">5</div><div class="m" style="left:64.50px;top:31.27px;font-size:14px;letter-spacing:-0.168px;"><span style="color:#5c5cb6">    worklog_description</span><span style="color:#8a8a8a"> = </span><span style="color:#5c5cb6">closing_comments</span><span style="color:#444">;</span></div><div class="m" style="left:25.88px;top:32.47px;font-size:13.7px;letter-spacing:0.012px;color:#999;">6</div><div class="m" style="left:64.50px;top:64.27px;font-size:14px;letter-spacing:-0.168px;"><span style="color:#5c5cb6">    requestID</span><span style="color:#8a8a8a"> = </span><span style="color:#5c5cb6">resource.getJSON</span><span style="color:#7a7a7a">(</span><span style="color:#cc1414">"revision"</span><span style="color:#7a7a7a">)</span><span style="color:#5c5cb6">.getJSON</span><span style="color:#7a7a7a">(</span><span style="color:#cc1414">"fields"</span><span style="color:#7a7a7a">)</span><span style="color:#5c5cb6">.getJSON</span><span style="color:#7a7a7a">(</span><span style="color:#cc1414">"Custom.sdp_request_id"</span><span style="color:#7a7a7a">)</span><span style="color:#444">;</span></div><div class="m" style="left:25.88px;top:66.47px;font-size:13.7px;letter-spacing:0.012px;color:#999;">7</div><div class="m" style="left:64.50px;top:98.27px;font-size:14px;letter-spacing:-0.168px;"><span style="color:#5c5cb6">    headers</span><span style="color:#8a8a8a"> = </span><span style="color:#7a7a7a">{</span></div><div class="m" style="left:25.88px;top:99.47px;font-size:13.7px;letter-spacing:0.012px;color:#999;">8</div><svg class="b" style="left:48.5px;top:105.5px;" width="6.5" height="5" viewBox="0 0 6.5 5"><path d="M0 0H6.5L3.25 5Z" fill="#8a8a8a"/></svg><div class="m" style="left:64.50px;top:131.27px;font-size:14px;letter-spacing:-0.168px;"><span style="color:#cc1414">        "authtoken"</span><span style="color:#5c5cb6">: </span><span style="color:#cc1414">"XXXXXXXX-XXXX-XXXX-XXXX-XXXXXXXXXXXX"</span></div><div class="m" style="left:25.88px;top:133.47px;font-size:13.7px;letter-spacing:0.012px;color:#999;">9</div><div class="m" style="left:64.50px;top:165.27px;font-size:14px;letter-spacing:-0.168px;"><span style="color:#7a7a7a">    }</span><span style="color:#444">;</span></div><div class="m" style="left:21.77px;top:166.47px;font-size:13.7px;letter-spacing:0.012px;color:#999;">10</div><div class="m" style="left:64.50px;top:198.27px;font-size:14px;letter-spacing:-0.168px;"><span style="color:#5c5cb6">    returnObj</span><span style="color:#8a8a8a"> = </span><span style="color:#c48f5f">Collection</span><span style="color:#7a7a7a">()</span><span style="color:#444">;</span></div><div class="m" style="left:21.77px;top:200.47px;font-size:13.7px;letter-spacing:0.012px;color:#999;">11</div><div class="m" style="left:64.50px;top:232.27px;font-size:14px;letter-spacing:-0.168px;"><span style="color:#5c5cb6">    currentdate_unix</span><span style="color:#8a8a8a"> = </span><span style="color:#c48f5f">zoho</span><span style="color:#5c5cb6">.currenttime.tostring</span><span style="color:#7a7a7a">()</span><span style="color:#5c5cb6">.unixEpoch</span><span style="color:#7a7a7a">()</span><span style="color:#444">;</span></div><div class="m" style="left:21.77px;top:233.47px;font-size:13.7px;letter-spacing:0.012px;color:#999;">12</div><div class="m" style="left:64.50px;top:265.27px;font-size:14px;letter-spacing:-0.168px;"><span style="color:#5c5cb6">    worklog_input_data</span><span style="color:#8a8a8a"> = </span><span style="color:#7a7a7a">{</span></div><div class="m" style="left:21.77px;top:267.47px;font-size:13.7px;letter-spacing:0.012px;color:#999;">13</div><svg class="b" style="left:48.5px;top:272.5px;" width="6.5" height="5" viewBox="0 0 6.5 5"><path d="M0 0H6.5L3.25 5Z" fill="#8a8a8a"/></svg><div class="m" style="left:64.50px;top:299.27px;font-size:14px;letter-spacing:-0.168px;"><span style="color:#cc1414">        "worklog"</span><span style="color:#5c5cb6">: </span><span style="color:#7a7a7a">{</span></div><div class="m" style="left:21.77px;top:300.47px;font-size:13.7px;letter-spacing:0.012px;color:#999;">14</div><svg class="b" style="left:48.5px;top:306.5px;" width="6.5" height="5" viewBox="0 0 6.5 5"><path d="M0 0H6.5L3.25 5Z" fill="#8a8a8a"/></svg><div class="m" style="left:64.50px;top:332.27px;font-size:14px;letter-spacing:-0.168px;"><span style="color:#cc1414">            "owner"</span><span style="color:#5c5cb6">:</span><span style="color:#7a7a7a">{</span></div><div class="m" style="left:21.77px;top:334.47px;font-size:13.7px;letter-spacing:0.012px;color:#999;">15</div><svg class="b" style="left:48.5px;top:339.5px;" width="6.5" height="5" viewBox="0 0 6.5 5"><path d="M0 0H6.5L3.25 5Z" fill="#8a8a8a"/></svg><div class="m" style="left:64.50px;top:366.27px;font-size:14px;letter-spacing:-0.168px;"><span style="color:#cc1414">                "id"</span><span style="color:#5c5cb6">: </span><span style="color:#d0506e">5</span></div><div class="m" style="left:21.77px;top:367.47px;font-size:13.7px;letter-spacing:0.012px;color:#999;">16</div><div class="m" style="left:64.50px;top:399.27px;font-size:14px;letter-spacing:-0.168px;"><span style="color:#7a7a7a">            }</span><span style="color:#222">,</span></div><div class="m" style="left:21.77px;top:401.47px;font-size:13.7px;letter-spacing:0.012px;color:#999;">17</div><div class="m" style="left:64.50px;top:433.27px;font-size:14px;letter-spacing:-0.168px;"><span style="color:#cc1414">            "description"</span><span style="color:#5c5cb6">: </span><span style="color:#5c5cb6">closing_comments</span><span style="color:#222">,</span></div><div class="m" style="left:21.77px;top:434.47px;font-size:13.7px;letter-spacing:0.012px;color:#999;">18</div><div class="m" style="left:64.50px;top:466.27px;font-size:14px;letter-spacing:-0.168px;"><span style="color:#cc1414">            "start_time"</span><span style="color:#5c5cb6">: </span><span style="color:#7a7a7a">{</span></div><div class="m" style="left:21.77px;top:468.47px;font-size:13.7px;letter-spacing:0.012px;color:#999;">19</div><svg class="b" style="left:48.5px;top:473.5px;" width="6.5" height="5" viewBox="0 0 6.5 5"><path d="M0 0H6.5L3.25 5Z" fill="#8a8a8a"/></svg><div class="m" style="left:64.50px;top:500.27px;font-size:14px;letter-spacing:-0.168px;"><span style="color:#cc1414">                "value"</span><span style="color:#5c5cb6">: </span><span style="color:#5c5cb6">currentdate_unix.tostring</span><span style="color:#7a7a7a">()</span></div><div class="m" style="left:21.77px;top:501.47px;font-size:13.7px;letter-spacing:0.012px;color:#999;">20</div></div>
<div class="b" style="left:1825px;top:408px;width:22px;height:515px;background:#f1f1f1;"></div>
<svg class="b" style="left:1830.3px;top:416.7px;" width="9.5" height="5" viewBox="0 0 9.5 5"><path d="M0 5L4.75 0L9.5 5Z" fill="#505050"/></svg>
<div class="b" style="left:1827px;top:458px;width:17px;height:102.5px;background:#c1c1c1;"></div>
<div class="b" style="left:557px;top:923px;width:1290px;height:52px;background:#f8f8f8;"></div>
<div class="t" style="left:613.00px;top:932.37px;font-size:16.25px;color:#3a3a3a;">}</div>
<!-- bottom -->
<div class="b" style="left:1885px;top:129px;width:2px;height:867px;background:#c8c8c8;"></div>
<div class="b" style="left:1887px;top:129px;width:33px;height:901px;background:#f1f1f1;"></div>
<svg class="b" style="left:1905px;top:138px;" width="9" height="5" viewBox="0 0 9 5"><path d="M0 5L4.5 0L9 5Z" fill="#505050"/></svg>
<svg class="b" style="left:1905px;top:1017px;" width="9" height="5" viewBox="0 0 9 5"><path d="M0 0L4.5 5L9 0Z" fill="#505050"/></svg>
<div class="b" style="left:1901px;top:447px;width:16.5px;height:335px;background:#c1c1c1;"></div>
<div class="b" style="left:0px;top:997px;width:1899px;height:33px;background:#fff;"></div>
<div class="b" style="left:0px;top:996px;width:1899px;height:1px;background:#cfcfcf;"></div>
<div class="b" style="left:1839px;top:997px;width:1px;height:33px;background:#d9d9d9;"></div>
<svg class="b" style="left:1496px;top:1002.5px;" width="20" height="15" viewBox="0 0 20 15"><ellipse cx="12.5" cy="7.5" rx="7" ry="5.5" fill="#7b7b7b"/><path d="M15 11L18.5 14.5L17 10Z" fill="#7b7b7b"/><ellipse cx="8" cy="6" rx="8" ry="6" fill="#7b7b7b" stroke="#fff" stroke-width="0.8"/><path d="M3 10L1.5 14.5L7.5 11.5Z" fill="#7b7b7b"/><circle cx="4.6" cy="6" r="1.1" fill="#fff"/><circle cx="8" cy="6" r="1.1" fill="#fff"/><circle cx="11.4" cy="6" r="1.1" fill="#fff"/></svg>
<div class="t" style="left:1489.50px;top:1014.27px;font-size:12.5px;color:#7b7b7b;letter-spacing:-0.164px;">Chats</div>
<svg class="b" style="left:1629.5px;top:1000px;" width="20" height="18" viewBox="0 0 20 18"><circle cx="10" cy="5" r="4.8" fill="#7b7b7b"/><path d="M0 18Q0 11.5 7 10.5L10 13L13 10.5Q20 11.5 20 18Z" fill="#7b7b7b"/></svg>
<div class="t" style="left:1609.00px;top:1014.27px;font-size:12.5px;color:#7b7b7b;letter-spacing:0.104px;">Technician</div>
<svg class="b" style="left:1761.5px;top:1001px;" width="20" height="17" viewBox="0 0 20 17"><circle cx="10" cy="3.6" r="3.4" fill="#7b7b7b"/><circle cx="3.8" cy="5" r="2.6" fill="#7b7b7b"/><circle cx="16.2" cy="5" r="2.6" fill="#7b7b7b"/><path d="M5 17L6 9Q10 6.5 14 9L15 17H11L10 10L9 17Z" fill="#7b7b7b"/><path d="M0 17L0.8 10Q3.5 7.8 6 9L5 17Z M20 17L19.2 10Q16.5 7.8 14 9L15 17Z" fill="#7b7b7b"/></svg>
<div class="t" style="left:1752.50px;top:1014.27px;font-size:12.5px;color:#7b7b7b;letter-spacing:-0.298px;">Groups</div>
<svg class="b" style="left:1855px;top:1005px;" width="27" height="19" viewBox="0 0 27 19"><path d="M1.56 3.22L8.12 3.09Q9.43 3.22 8.56 4.75L2 14.37Q1.12 16.56 3.31 16.65H10.75Q12.5 16.56 13.37 15.25L20.37 5.84Q21.46 4.75 22.12 6.28L24.74 14.15Q24.96 15.68 23 15.25L13.37 12.4Q10.75 11.75 10.75 10Q11.18 8.25 14.03 5.84" fill="none" stroke="#2847a8" stroke-width="1.4" stroke-linecap="round" stroke-linejoin="round"/><circle cx="16" cy="2.04" r="1.05" fill="#2847a8"/></svg>
<div class="b" style="left:1726.6px;top:828.5px;width:134px;height:134px;background:#fff;border-radius:50%;box-shadow:0 0 55px 12px rgba(0,0,0,0.11),0 3px 20px 3px rgba(0,0,0,0.17);"></div>
<div class="b" style="left:1729.6px;top:831.5px;width:128px;height:128px;background:#c3f3ff;border-radius:50%;overflow:hidden;"><svg class="b" style="left:0px;top:0px;" width="128" height="128" viewBox="0 0 128 128"><path d="M-10 -10H57L-3 92Z" fill="#ab650d"/><path d="M91.15 11.78 L97.02 18.01 L105.22 15.55 L98.99 21.42 L101.45 29.62 L95.58 23.39 L87.38 25.85 L93.61 19.98 Z" fill="#e9a640"/><path d="M77.23 23.68 L81.10 28.25 L86.92 26.83 L82.35 30.70 L83.77 36.52 L79.90 31.95 L74.08 33.37 L78.65 29.50 Z" fill="#edb25e"/><path d="M93.20 32.74 L98.90 38.79 L106.86 36.40 L100.81 42.10 L103.20 50.06 L97.50 44.01 L89.54 46.40 L95.59 40.70 Z" fill="#e9a135"/></svg><div class="t" style="left:-9.3px;top:27.9px;font-size:12.5px;color:#fff;font-weight:700;transform:rotate(-59.5deg);transform-origin:center;width:50px;text-align:center;letter-spacing:0.2px;">NEW</div></div>
<div class="t" style="left:1759.65px;top:879.87px;font-size:16.25px;color:#222;letter-spacing:-0.618px;">Enterprise</div>
<div class="t" style="left:1768.85px;top:901.87px;font-size:16.25px;color:#222;letter-spacing:-0.781px;">Service</div>
<div class="t" style="left:1748.65px;top:923.87px;font-size:16.25px;color:#222;letter-spacing:-0.484px;">Management</div>
<!-- taskbar -->
<div class="b" style="left:0px;top:1030px;width:1920px;height:50px;background:#1a2848;"></div>
<svg class="b" style="left:19.5px;top:1044.5px;" width="21" height="21" viewBox="0 0 21 21"><path d="M0 3L9 1.8V10H0Z M10.3 1.6L21 0V10H10.3Z M0 11.2H9V19.4L0 18.2Z M10.3 11.2H21V21L10.3 19.5Z" fill="#fff"/></svg>
<div class="b" style="left:60px;top:1030px;width:430px;height:50px;background:#f2f2f2;border-top:1px solid #d6d6d6;box-sizing:border-box;"></div>
<svg class="b" style="left:74px;top:1044px;" width="24" height="23" viewBox="0 0 24 23"><circle cx="14.3" cy="8.2" r="6.3" fill="none" stroke="#222" stroke-width="1.5"/><path d="M9.8 12.8L1.5 20.7" stroke="#222" stroke-width="1.6" stroke-linecap="round"/></svg>
<div class="t" style="left:110.60px;top:1045.06px;font-size:18px;color:#3a3a3a;letter-spacing:0.206px;">Type here to search</div>
<svg class="b" style="left:509px;top:1044px;" width="23" height="21" viewBox="0 0 23 21"><path d="M1.5 1V4.2H13.5V1M1.5 19.8V16.5H13.5V19.8M19.5 1V5.5M19.5 11V19.8" fill="none" stroke="#fff" stroke-width="1.25"/><rect x="1.5" y="6.7" width="12" height="7.8" fill="none" stroke="#fff" stroke-width="1.25"/><rect x="18" y="7" width="3" height="2.9" fill="#fff"/></svg>
<div class="b" style="left:678px;top:1030px;width:56.5px;height:50px;background:#464f69;"></div>
<div class="b" style="left:734.5px;top:1030px;width:4.5px;height:50px;background:#373f59;"></div>
<div class="b" style="left:621px;top:1077px;width:40.3px;height:3px;background:#7ab9ec;"></div><div class="b" style="left:661.6px;top:1077px;width:10.1px;height:3px;background:#5b90c3;"></div>
<div class="b" style="left:678px;top:1077px;width:56.5px;height:3px;background:#7ab9ec;"></div><div class="b" style="left:734.8px;top:1077px;width:4.2px;height:3px;background:#5b90c3;"></div>
<div class="b" style="left:744.8px;top:1077px;width:40.2px;height:3px;background:#7ab9ec;"></div><div class="b" style="left:785.3px;top:1077px;width:10.3px;height:3px;background:#5b90c3;"></div>
<div class="b" style="left:807px;top:1077px;width:51px;height:3px;background:#7ab9ec;"></div>
<div class="b" style="left:869.4px;top:1077px;width:39.4px;height:3px;background:#7ab9ec;"></div><div class="b" style="left:909.1px;top:1077px;width:10.6px;height:3px;background:#5b90c3;"></div>
<div class="b" style="left:931px;top:1077px;width:51px;height:3px;background:#7ab9ec;"></div>
<div class="b" style="left:1055px;top:1077px;width:50.6px;height:3px;background:#7ab9ec;"></div>
<div class="b" style="left:1117px;top:1077px;width:51px;height:3px;background:#7ab9ec;"></div>
<div class="b" style="left:1179px;top:1077px;width:50.7px;height:3px;background:#7ab9ec;"></div>
<div class="b" style="left:1241px;top:1077px;width:50.6px;height:3px;background:#7ab9ec;"></div>
<svg class="b" style="left:569px;top:1039.6px;" width="30.6" height="30.8" viewBox="0 0 30.6 30.8"><defs><linearGradient id="eg1" x1="0.05" y1="0.75" x2="0.95" y2="0.3"><stop offset="0" stop-color="#0c6fd6"/><stop offset="0.4" stop-color="#25b3e4"/><stop offset="0.7" stop-color="#36cdbd"/><stop offset="1" stop-color="#78e640"/></linearGradient><linearGradient id="eg2" x1="0" y1="0" x2="0.6" y2="1"><stop offset="0" stop-color="#1a6cc4"/><stop offset="1" stop-color="#0d4d9c"/></linearGradient><linearGradient id="eg3" x1="0" y1="0" x2="0" y2="1"><stop offset="0" stop-color="#1f9bea"/><stop offset="1" stop-color="#0b7ad8"/></linearGradient></defs><path d="M0.3 15C0.3 6.5 7 0.2 15.3 0.2C24 0.2 30.4 6.5 30.3 14C30.2 19.5 26 21.6 22 21C19 20.5 17.3 19 18.2 17C19.6 13.5 16.5 10 12 10.2C6 10.5 2.5 16 3 21Z" fill="url(#eg1)"/><path d="M0.3 15C0.3 12 1.5 9.5 3.5 8C8 6 13 7.5 14 10.3C9 11 6.5 16 8 22C9.5 27 14 30 19 30.3C9 32.5 0.3 25 0.3 15Z" fill="url(#eg3)"/><path d="M11.5 10.3C7.5 12 6.5 18 9 23.5C11.5 29 18 31.8 24 29.5C27 28.2 28.8 25.6 29.3 23.4C25.5 26.3 18.5 26 15.3 21C13.3 17.8 14 14.5 15.6 13C14.5 11 13 10.2 11.5 10.3Z" fill="url(#eg2)"/></svg>
<svg class="b" style="left:632px;top:1042.7px;" width="27.5" height="23.3" viewBox="0 0 27.5 23.3"><defs><linearGradient id="fg" x1="0" y1="0" x2="0" y2="1"><stop offset="0" stop-color="#ffdb70"/><stop offset="1" stop-color="#ffcd48"/></linearGradient></defs><path d="M0 1.2Q0 0 1.2 0H11L12.6 1.6V4.2H0Z" fill="#e9a300"/><path d="M0 3.8H11L13 2.5H26.5Q27.5 2.5 27.5 3.5V21Q27.5 22 26.5 22H1Q0 22 0 21Z" fill="url(#fg)"/><path d="M5.2 23.3V13.9Q5.2 12.6 6.5 12.6H21.7Q23 12.6 23 13.9V23.3H18.7V16.6H9.3V23.3Z" fill="#3d98e4"/></svg>
<svg class="b" style="left:693.8px;top:1040.5px;" width="28" height="28" viewBox="0 0 28 28"><circle cx="14" cy="14" r="14" fill="#db4437"/><path d="M14 14L1.88 7A14 14 0 0 0 14 28L20.06 17.5Z" fill="#0f9d58"/><path d="M14 14L20.06 17.5L14 28A14 14 0 0 0 26.12 7H14Z" fill="#ffcd40"/><circle cx="14" cy="14" r="6.4" fill="#f1f1f1"/><circle cx="14" cy="14" r="5" fill="#4285f4"/></svg>
<svg class="b" style="left:755.5px;top:1042.8px;" width="27.5" height="22.5" viewBox="0 0 27.5 22.5"><defs><linearGradient id="tg" x1="0.3" y1="0" x2="0.6" y2="1"><stop offset="0" stop-color="#8a8a8a"/><stop offset="0.5" stop-color="#000"/></linearGradient></defs><rect x="0.5" y="0.5" width="26.5" height="21.5" fill="#000" stroke="#b9b9b9" stroke-width="1"/><path d="M1 3.4H26.5V9Q9 8 1 17Z" fill="url(#tg)" opacity="0.55"/><rect x="1" y="1" width="25.5" height="2.4" fill="#8d8d8d"/><path d="M3 5.5H4.6V7.6H3M6 6H6.4M6 7.5H6.4M8.3 5.2L10.5 7.5M11 7.8H16.8" stroke="#eee" stroke-width="0.9" fill="none"/></svg>
<svg class="b" style="left:819px;top:1040.3px;" width="25.6" height="28.6" viewBox="0 0 25.6 28.6"><defs><linearGradient id="sh" x1="0" y1="0" x2="0" y2="1"><stop offset="0" stop-color="#2f9df2"/><stop offset="1" stop-color="#1a6cc6"/></linearGradient></defs><path d="M0.2 3.4Q12.8 -2.6 25.4 3.4V14.5C25.4 21 19.5 25.5 12.8 28.4C6.1 25.5 0.2 21 0.2 14.5Z" fill="#fff"/><path d="M3.2 5.2Q12.8 1.2 22.4 5.2V14.3C22.4 19.5 17.8 22.8 12.8 25.1C7.8 22.8 3.2 19.5 3.2 14.3Z" fill="url(#sh)"/><rect x="6.3" y="7.6" width="3.6" height="2.3" rx="0.6" fill="#fff"/><rect x="6.3" y="11.1" width="3.6" height="2.3" rx="0.6" fill="#fff"/><rect x="6.3" y="14.6" width="3.6" height="2.3" rx="0.6" fill="#fff"/><rect x="10.9" y="7.6" width="3.6" height="2.3" rx="0.6" fill="#fff"/><rect x="10.9" y="14.6" width="3.6" height="2.3" rx="0.6" fill="#fff"/><rect x="15.5" y="7.6" width="3.6" height="2.3" rx="0.6" fill="#fff"/><rect x="15.5" y="11.1" width="3.6" height="2.3" rx="0.6" fill="#fff"/><rect x="15.5" y="14.6" width="3.6" height="2.3" rx="0.6" fill="#fff"/></svg>
<svg class="b" style="left:878.5px;top:1039.5px;" width="31" height="31" viewBox="0 0 31 31"><path d="M22.5 0.8L30 4.4V26.6L22.5 30.2Z" fill="#2aaaf3"/><path d="M22.5 0.8L3.2 18.6L0.6 16.5Q0 15.8 0.8 15L22.5 0.8Z" fill="#1a8ad8" opacity="0"/><path d="M22.8 1L23.5 9L4.2 22.8L1.2 20.4Q0.5 19.6 1.3 18.8Z" fill="#0f7bc9"/><path d="M22.8 30L23.5 22L4.2 8.2L1.2 10.6Q0.5 11.4 1.3 12.2Z" fill="#1e93e3"/><path d="M22.5 9.5V21.5L14.5 15.5Z" fill="#1a2848"/></svg>
<svg class="b" style="left:943px;top:1042px;" width="26" height="26" viewBox="0 0 26 26"><defs><linearGradient id="ij" x1="0" y1="0" x2="1" y2="0.9"><stop offset="0" stop-color="#ff8a1c"/><stop offset="0.18" stop-color="#fe2d6a"/><stop offset="0.5" stop-color="#9b3fe0"/><stop offset="0.8" stop-color="#1f7bff"/><stop offset="1" stop-color="#22c4ff"/></linearGradient><linearGradient id="ij2" x1="0" y1="0" x2="1" y2="1"><stop offset="0" stop-color="#3b0c3c"/><stop offset="0.6" stop-color="#0c030d"/></linearGradient><linearGradient id="ij3" x1="0" y1="0" x2="0" y2="1"><stop offset="0.3" stop-color="#fe2d8a" stop-opacity="0"/><stop offset="1" stop-color="#1f8bff"/></linearGradient></defs><rect x="0" y="0" width="26" height="26" fill="url(#ij)"/><rect x="0" y="0" width="13" height="26" fill="url(#ij3)"/><rect x="2.6" y="2.6" width="20.8" height="20.8" fill="url(#ij2)"/><rect x="5.7" y="18.6" width="7" height="1.4" fill="#fff"/></svg>
<div class="m" style="left:947.90px;top:1042.60px;font-size:10.5px;color:#fff;letter-spacing:-1.602px;font-weight:700;">IJ</div>
<svg class="b" style="left:1002.5px;top:1040.5px;" width="29" height="28" viewBox="0 0 29 28"><defs><linearGradient id="np" x1="0.85" y1="0.05" x2="0.15" y2="0.85"><stop offset="0" stop-color="#e6f5fa"/><stop offset="0.45" stop-color="#a9dbea"/><stop offset="1" stop-color="#3d97b4"/></linearGradient></defs><path d="M25.9 3.8L27.8 5.2L27.6 23.6L26.8 23.5Z" fill="#d2a343"/><path d="M10.4 1.5L25.9 3.8L26.8 23.5L19.8 26.8L1.5 20.7Z" fill="url(#np)"/><path d="M1.5 20.7L19.8 26.8L20.3 25.2L2.3 19.3Z" fill="#2f86a5"/><path d="M19.8 26.8L26.8 23.5L26.2 12.5Q24.5 20 18 24.5Z" fill="#eef4f6"/><path d="M10.2 1.6L26 3.9" stroke="#c9ced1" stroke-width="1.7" stroke-dasharray="1.3 0.9"/></svg>
<svg class="b" style="left:1066px;top:1043px;" width="27" height="22" viewBox="0 0 27 22"><rect x="0" y="0" width="27" height="22" fill="#f3f3f3"/><rect x="0.5" y="0.5" width="26" height="21" fill="none" stroke="#d4d4d4"/><rect x="0.5" y="0.5" width="26" height="2.4" fill="#fbfbfb"/><defs><linearGradient id="wg" x1="0.2" y1="0" x2="0.8" y2="1"><stop offset="0" stop-color="#3b7f9d"/><stop offset="0.5" stop-color="#4d9a86"/><stop offset="1" stop-color="#69b064"/></linearGradient><linearGradient id="wg2" x1="0" y1="0" x2="0" y2="1"><stop offset="0" stop-color="#4a7fc0"/><stop offset="1" stop-color="#6cb36a"/></linearGradient></defs><rect x="2.6" y="4.8" width="10.6" height="13.8" fill="url(#wg)"/><path d="M15.5 5.5H21M15.5 7.7H21M15.5 9.9H21M15.5 12.1H21M15.5 14.3H21M15.5 16.5H21" stroke="#d9d9d9" stroke-width="1.1"/><rect x="23" y="4" width="1.9" height="9.4" fill="url(#wg2)"/></svg>
<svg class="b" style="left:1126.5px;top:1040px;" width="30" height="30" viewBox="0 0 30 30"><defs><linearGradient id="st" x1="0" y1="0" x2="0" y2="1"><stop offset="0" stop-color="#ffffff"/><stop offset="0.55" stop-color="#f6f6f6"/><stop offset="1" stop-color="#dedede"/></linearGradient></defs><path d="M8.4 6.6V3.4Q8.4 1.9 9.9 1.9H20.3Q21.8 1.9 21.8 3.4V6.6" fill="none" stroke="#2bb0f2" stroke-width="1.9"/><path d="M0.4 6.9Q0.4 4.9 2.4 4.9H27.2Q29.2 4.9 29.2 6.9V25Q29.2 29.6 24.6 29.6H5Q0.4 29.6 0.4 25Z" fill="url(#st)"/><path d="M8.4 4.9V6.6M21.8 4.9V6.6" stroke="#2bb0f2" stroke-width="1.9"/><rect x="9.5" y="11.8" width="5.2" height="5.2" fill="#f25022"/><rect x="15.6" y="11.8" width="5.2" height="5.2" fill="#7fba00"/><rect x="9.5" y="17.9" width="5.2" height="5.2" fill="#00a4ef"/><rect x="15.6" y="17.9" width="5.2" height="5.2" fill="#ffb900"/></svg>
<svg class="b" style="left:1191.4px;top:1042.2px;" width="24" height="24" viewBox="0 0 24 24"><g transform="translate(12,12)"><path d="M-2.6 -7.2L-1.8 -11.3H1.8L2.6 -7.2Z" fill="#fff" stroke="#fff" stroke-width="0.5" stroke-linejoin="round" transform="rotate(22.5)"/><path d="M-2.6 -7.2L-1.8 -11.3H1.8L2.6 -7.2Z" fill="#fff" stroke="#fff" stroke-width="0.5" stroke-linejoin="round" transform="rotate(67.5)"/><path d="M-2.6 -7.2L-1.8 -11.3H1.8L2.6 -7.2Z" fill="#fff" stroke="#fff" stroke-width="0.5" stroke-linejoin="round" transform="rotate(112.5)"/><path d="M-2.6 -7.2L-1.8 -11.3H1.8L2.6 -7.2Z" fill="#fff" stroke="#fff" stroke-width="0.5" stroke-linejoin="round" transform="rotate(157.5)"/><path d="M-2.6 -7.2L-1.8 -11.3H1.8L2.6 -7.2Z" fill="#fff" stroke="#fff" stroke-width="0.5" stroke-linejoin="round" transform="rotate(202.5)"/><path d="M-2.6 -7.2L-1.8 -11.3H1.8L2.6 -7.2Z" fill="#fff" stroke="#fff" stroke-width="0.5" stroke-linejoin="round" transform="rotate(247.5)"/><path d="M-2.6 -7.2L-1.8 -11.3H1.8L2.6 -7.2Z" fill="#fff" stroke="#fff" stroke-width="0.5" stroke-linejoin="round" transform="rotate(292.5)"/><path d="M-2.6 -7.2L-1.8 -11.3H1.8L2.6 -7.2Z" fill="#fff" stroke="#fff" stroke-width="0.5" stroke-linejoin="round" transform="rotate(337.5)"/><circle r="8.3" fill="#fff"/><circle r="5.4" fill="#1a2848"/></g></svg>
<svg class="b" style="left:1254px;top:1039px;" width="30" height="30" viewBox="0 0 30 30"><path d="M0.83 11L11.67 7.33L18.33 9.83L22.33 14.67V24L11.33 28.17L0.83 24.33Z" fill="#1a86cd"/><path d="M0.83 11L11.33 15.17V28.17L0.83 24.33Z" fill="#3fb7f3"/><path d="M0.83 11L11.67 7.33L18.33 9.83L11.33 15.17Z" fill="#1d8ed6"/><path d="M11.33 15.17L18.33 9.83L22.33 14.67V24L11.33 28.17Z" fill="#0f6fb4"/><path d="M8.5 15.5L11.8 16.7V21L8.5 19.8Z M15 16.2L18 15.2V19.4L15 20.5Z M8.5 22.8L11.8 24V28L8.5 26.8Z M4.6 21.3L7.4 22.3V26.6L4.6 25.6Z M11.9 11.3L14.6 10.4V14.6L11.9 15.6Z" fill="#55ccff"/><path d="M4.3 12.4V25.6M7.8 13.8V26.9M0.83 15.5L11.33 19.6L22.33 17.8M0.83 19.9L11.33 24L22.33 21" stroke="#0b5d9c" stroke-width="0.7" fill="none" opacity="0.8"/><path d="M12.60 3.30L16.86 0.90L20.00 2.93L15.93 5.52Z" fill="#4cc6fb"/><path d="M12.60 3.30L15.93 5.52L16.67 8.48L13.53 6.45Z" fill="#39b0ee"/><path d="M15.93 5.52L20.00 2.93L19.82 6.26L16.67 8.48Z" fill="#1577bd"/><path d="M19.50 9.90L23.75 7.50L26.90 9.54L22.83 12.12Z" fill="#4cc6fb"/><path d="M19.50 9.90L22.83 12.12L23.57 15.08L20.42 13.05Z" fill="#39b0ee"/><path d="M22.83 12.12L26.90 9.54L26.71 12.86L23.57 15.08Z" fill="#1577bd"/></svg>
<svg class="b" style="left:1476.5px;top:1042.5px;" width="27" height="25" viewBox="0 0 27 25"><defs><linearGradient id="sun" x1="0.2" y1="0.9" x2="0.9" y2="0.1"><stop offset="0" stop-color="#ffe14a"/><stop offset="0.6" stop-color="#fcc21f"/><stop offset="1" stop-color="#f59a12"/></linearGradient><linearGradient id="cl" x1="0.2" y1="0" x2="0.7" y2="1"><stop offset="0" stop-color="#f4f9fe"/><stop offset="0.6" stop-color="#cfe6f8"/><stop offset="1" stop-color="#a8d1f2"/></linearGradient></defs><circle cx="11.8" cy="11" r="10.3" fill="url(#sun)"/><path d="M6 24.2Q1 24.2 1 19.7Q1 15.5 5.2 14.8Q6 8.5 12.2 8.3Q17 8.3 18.8 13Q22.5 12 24.7 15Q27 19 24.5 22.5Q23 24.2 20.5 24.2Z" fill="url(#cl)"/></svg>
<div class="t" style="left:1515.50px;top:1046.26px;font-size:18px;color:#fff;letter-spacing:-1.073px;">28°C</div>
<svg class="b" style="left:1574px;top:1049.5px;" width="16" height="10.5" viewBox="0 0 16 10.5"><path d="M0.8 9.8L8 1.5L15.2 9.8" fill="none" stroke="#fff" stroke-width="1.5"/></svg>
<svg class="b" style="left:1601px;top:1044.5px;" width="22" height="22" viewBox="0 0 22 22"><path d="M1 3.2L19.5 1V16L1 18.5Z" fill="none" stroke="#fff" stroke-width="1.2"/><path d="M6.5 7.5H12L10 5.5M12.5 11.5H7L9 13.5" fill="none" stroke="#fff" stroke-width="1.1"/><circle cx="16.5" cy="16" r="5.2" fill="#f7890c"/></svg>
<svg class="b" style="left:1631.5px;top:1048px;" width="21" height="14" viewBox="0 0 21 14"><rect x="4.5" y="3.5" width="14.5" height="9" fill="none" stroke="#fff" stroke-width="1.2"/><rect x="19" y="6" width="1.6" height="4" fill="#fff"/><path d="M2.8 0.5V3.5M5.6 0.5V3.5M1.5 3.5H7V6.5Q7 8.3 4.3 8.3Q1.5 8.3 1.5 6.5ZM4.3 8.3V12.5H6" fill="#1a2848" stroke="#fff" stroke-width="1.1"/></svg>
<svg class="b" style="left:1664px;top:1047px;" width="18" height="16" viewBox="0 0 18 16"><path d="M1 15Q1.5 5 11.5 1.2" fill="none" stroke="#cfd3da" stroke-width="1.2"/><path d="M5 15Q5.5 8 13.5 5.2" fill="none" stroke="#fff" stroke-width="1.3"/><path d="M9 15Q9.3 11 15 9.2" fill="none" stroke="#fff" stroke-width="1.3"/><circle cx="14.3" cy="14" r="1.5" fill="#fff"/></svg>
<svg class="b" style="left:1691px;top:1047.5px;" width="21" height="16" viewBox="0 0 21 16"><path d="M1 5.5H4L8 1.5V14.5L4 10.5H1Z" fill="none" stroke="#fff" stroke-width="1.2" stroke-linejoin="round"/><path d="M10.8 5.5Q12.3 8 10.8 10.5" fill="none" stroke="#fff" stroke-width="1.1"/><path d="M13.6 3.5Q16.4 8 13.6 12.5" fill="none" stroke="#fff" stroke-width="1.1"/><path d="M16.6 1.2Q20.8 8 16.6 14.8" fill="none" stroke="#8d95a6" stroke-width="1.1"/></svg>
<div class="t" style="left:1725.50px;top:1046.30px;font-size:15px;color:#fff;letter-spacing:-2.253px;">ENG</div>
<div class="t" style="left:1791.00px;top:1034.10px;font-size:15px;color:#fff;letter-spacing:-1.009px;">18:02</div>
<div class="t" style="left:1771.00px;top:1057.10px;font-size:15px;color:#fff;letter-spacing:-0.248px;">15-02-2022</div>
<svg class="b" style="left:1869px;top:1044.5px;" width="22" height="22" viewBox="0 0 22 22"><path d="M0.3 0.5H20.3V17.5H10.5L14 21L7 17.5H0.3Z" fill="#fff"/><path d="M4 5H16.5M4 8.8H16.5M4 12.6H16.5" stroke="#1a2848" stroke-width="1.5"/></svg>
<svg class="b" style="left:1876px;top:1052px;" width="25" height="25" viewBox="0 0 25 25"><circle cx="12.4" cy="12.5" r="9.9" fill="#33343d" stroke="#6b7080" stroke-width="1.2"/></svg>
<div class="t" style="left:1884.40px;top:1054.85px;font-size:14px;color:#fff;font-weight:700;">3</div>
<div class="b" style="left:1914px;top:1030px;width:1px;height:50px;background:#7c8496;"></div>
</body></html>
